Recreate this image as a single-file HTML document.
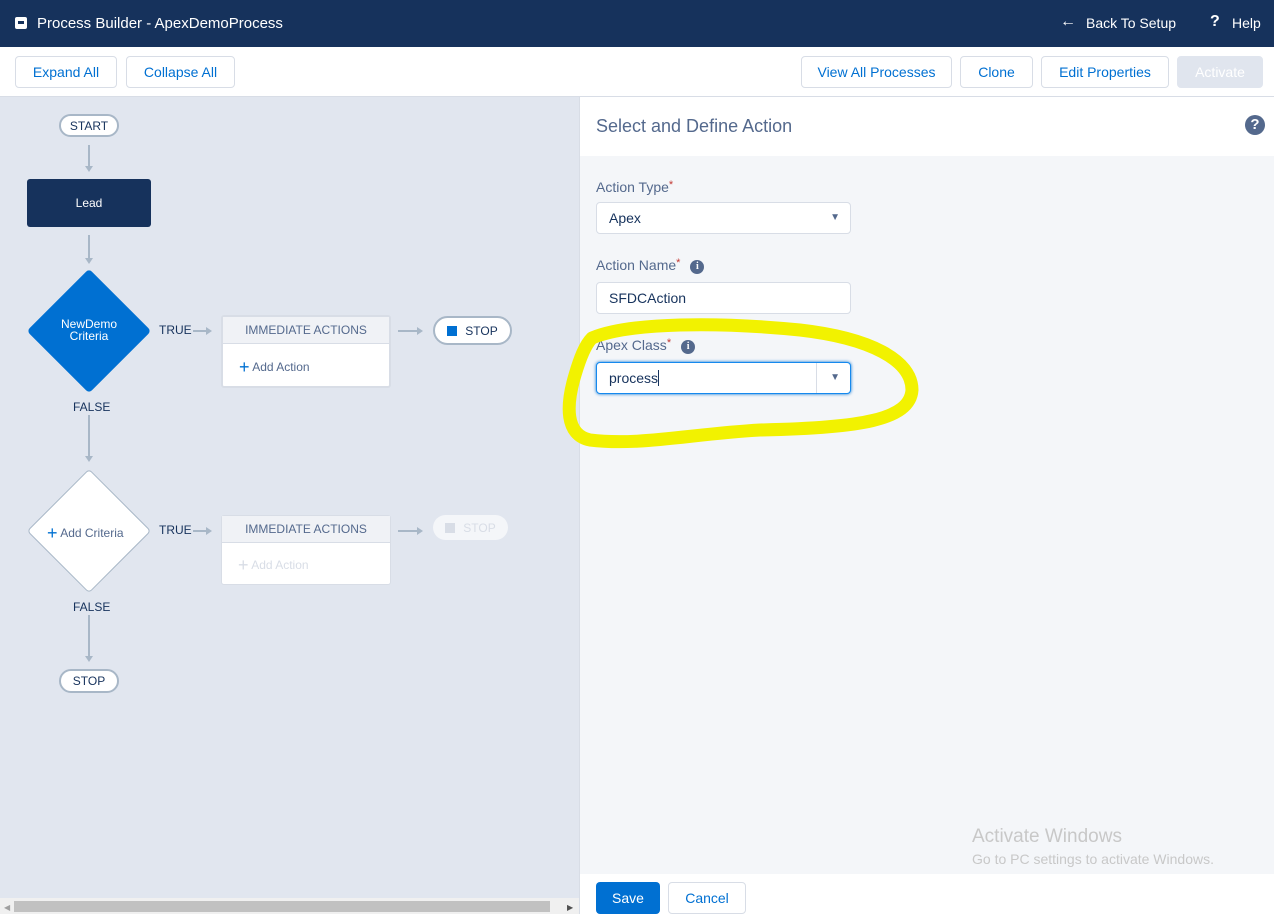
<!DOCTYPE html>
<html><head><meta charset="utf-8"><style>
*{box-sizing:border-box;margin:0;padding:0}
body{width:1274px;height:914px;overflow:hidden;position:relative;font-family:"Liberation Sans",sans-serif;background:#fff;font-size:13px}
.a{position:absolute}
.hdr{left:0;top:0;width:1274px;height:47px;background:#16325c;color:#fff}
.btn{position:absolute;top:56px;height:32px;border:1px solid #d8dde6;border-radius:4px;background:#fff;color:#0070d2;font-size:14px;display:flex;align-items:center;justify-content:center}
.canvas{left:0;top:97px;width:580px;height:817px;background:#e1e6ef}
.pill{position:absolute;height:23px;border:2px solid #a8b7c7;border-radius:12px;background:#fff;font-size:12px;color:#16325c;display:flex;align-items:center;justify-content:center}
.vl{position:absolute;width:1.5px;background:#a8b7c7}
.vl:after{content:"";position:absolute;left:-3.5px;bottom:-5px;border-left:4px solid transparent;border-right:4px solid transparent;border-top:6px solid #a8b7c7}
.hl{position:absolute;height:1.5px;background:#a8b7c7}
.hl:after{content:"";position:absolute;right:-5px;top:-3.5px;border-top:4px solid transparent;border-bottom:4px solid transparent;border-left:6px solid #a8b7c7}
.lbl{position:absolute;font-size:12px;color:#16325c}
.ia{position:absolute;width:170px;border:2px solid #d8dde6;border-radius:3px;background:#fff}
.ia .t{height:27px;background:#f0f2f6;border-bottom:1px solid #d8dde6;font-size:12px;color:#54698d;text-align:center;line-height:26px}
.flabel{position:absolute;left:596px;font-size:14px;color:#54698d}
.flabel b{color:#c23934;font-weight:normal;font-size:11px;vertical-align:top}
.info{display:inline-block;width:14px;height:14px;border-radius:50%;background:#54698d;color:#fff;font-size:10px;font-weight:bold;text-align:center;line-height:14px;margin-left:10px;font-family:"Liberation Serif",serif;vertical-align:1px}
.inp{position:absolute;left:596px;width:255px;height:32px;border:1px solid #d8dde6;border-radius:4px;background:#fff;font-size:14px;color:#16325c;padding-left:12px;line-height:30px}
</style></head><body>
<div class="a hdr">
  <div class="a" style="left:15px;top:17px;width:12px;height:12px;background:#fff;border-radius:2px"><div class="a" style="left:3px;top:4px;width:6px;height:3px;background:#16325c"></div></div>
  <div class="a" style="left:37px;top:15px;font-size:15px">Process Builder - ApexDemoProcess</div>
  <div class="a" style="left:1060px;top:13px;font-size:16px">&#8592;</div>
  <div class="a" style="left:1086px;top:15px;font-size:14px">Back To Setup</div>
  <div class="a" style="left:1210px;top:13px;font-size:16px;font-weight:bold">?</div>
  <div class="a" style="left:1232px;top:15px;font-size:14px">Help</div>
</div>
<div class="a" style="left:0;top:96px;width:1274px;height:1px;background:#d8dde6"></div>
<div class="btn" style="left:15px;width:102px">Expand All</div>
<div class="btn" style="left:126px;width:109px">Collapse All</div>
<div class="btn" style="left:801px;width:151px">View All Processes</div>
<div class="btn" style="left:960px;width:73px">Clone</div>
<div class="btn" style="left:1041px;width:128px">Edit Properties</div>
<div class="btn" style="left:1177px;width:86px;background:#e0e5ee;border-color:#e0e5ee;color:#fff">Activate</div>

<div class="a canvas">
  <div class="pill" style="left:59px;top:17px;width:60px">START</div>
  <div class="vl" style="left:88px;top:48px;height:22px"></div>
  <div class="a" style="left:27px;top:82px;width:124px;height:48px;background:#16325c;border-radius:3px;color:#fff;font-size:12px;text-align:center;line-height:48px">Lead</div>
  <div class="vl" style="left:88px;top:138px;height:24px"></div>
  <div class="a" style="left:45px;top:190px;width:88px;height:88px;background:#0070d2;transform:rotate(45deg);border-radius:4px"></div>
  <div class="a" style="left:27px;top:221px;width:124px;text-align:center;color:#fff;font-size:12px;line-height:12px">NewDemo<br>Criteria</div>
  <div class="lbl" style="left:159px;top:226px">TRUE</div>
  <div class="hl" style="left:193px;top:233px;width:14px"></div>
  <div class="ia" style="left:221px;top:218px;height:73px"><div class="t">IMMEDIATE ACTIONS</div><div style="padding:13px 0 0 16px;font-size:12px;color:#54698d"><span style="color:#0070d2;font-size:18px;vertical-align:-2px">+</span> Add Action</div></div>
  <div class="hl" style="left:398px;top:233px;width:20px"></div>
  <div class="pill" style="left:433px;top:219px;width:79px;height:29px;border-radius:15px;font-size:12px"><span style="width:10px;height:10px;background:#0070d2;margin-right:8px"></span>STOP</div>
  <div class="lbl" style="left:73px;top:303px">FALSE</div>
  <div class="vl" style="left:88px;top:318px;height:42px"></div>
  <div class="a" style="left:45px;top:390px;width:88px;height:88px;background:#fff;border:1px solid #a8b7c7;transform:rotate(45deg);border-radius:4px"></div>
  <div class="a" style="left:47px;top:426px;font-size:12px;color:#54698d"><span style="color:#0070d2;font-size:18px;vertical-align:-2px">+</span> Add Criteria</div>
  <div class="lbl" style="left:159px;top:426px">TRUE</div>
  <div class="hl" style="left:193px;top:433px;width:14px"></div>
  <div class="ia" style="left:221px;top:418px;height:70px;border-width:1px"><div class="t">IMMEDIATE ACTIONS</div><div style="padding:12px 0 0 16px;font-size:12px;color:#d8dde6"><span style="font-size:18px;vertical-align:-2px">+</span> Add Action</div></div>
  <div class="hl" style="left:398px;top:433px;width:20px"></div>
  <div class="a" style="left:433px;top:418px;width:75px;height:25px;border-radius:13px;background:#f4f6f9;font-size:12px;color:#d8dde6;display:flex;align-items:center;justify-content:center"><span style="width:10px;height:10px;background:#d8dde6;margin-right:8px"></span>STOP</div>
  <div class="lbl" style="left:73px;top:503px">FALSE</div>
  <div class="vl" style="left:88px;top:518px;height:42px"></div>
  <div class="pill" style="left:59px;top:572px;width:60px;height:24px">STOP</div>
  <div class="a" style="left:0;top:801px;width:580px;height:16px;background:#f0f0f0"></div>
  <div class="a" style="left:14px;top:804px;width:536px;height:11px;background:#c1c1c1"></div>
  <div class="a" style="left:4px;top:806px;font-size:8px;color:#a0a0a0">&#9664;</div>
  <div class="a" style="left:567px;top:806px;font-size:8px;color:#505050">&#9654;</div>
</div>
<div class="a" style="left:579px;top:97px;width:1px;height:817px;background:#d8dde6"></div>

<div class="a" style="left:580px;top:156px;width:694px;height:718px;background:#f4f6f9"></div>
<div class="a" style="left:596px;top:116px;font-size:18px;color:#54698d">Select and Define Action</div>
<div class="a" style="left:1245px;top:115px;width:20px;height:20px;border-radius:50%;background:#54698d;color:#fff;font-size:15px;font-weight:bold;text-align:center;line-height:20px">?</div>

<div class="flabel" style="top:179px">Action Type<b>*</b></div>
<div class="inp" style="top:202px">Apex<span class="a" style="right:10px;top:0;font-size:10px;color:#54698d">&#9660;</span></div>
<div class="flabel" style="top:257px">Action Name<b>*</b><span class="info">i</span></div>
<div class="inp" style="top:282px">SFDCAction</div>
<div class="flabel" style="top:337px">Apex Class<b>*</b><span class="info">i</span></div>
<div class="inp" style="top:362px;border-color:#1589ee;box-shadow:0 0 3px #0070d2">process<span style="display:inline-block;width:1px;height:16px;background:#16325c;vertical-align:-3px"></span><span class="a" style="left:219px;top:0;width:1px;height:30px;background:#d8dde6"></span><span class="a" style="right:10px;top:0;font-size:10px;color:#54698d">&#9660;</span></div>

<svg class="a" style="left:0;top:0" width="1274" height="914"><path d="M592 338 C630 322 720 322 800 330 C870 338 912 360 912 390 C910 420 860 428 760 430 C690 434 640 446 590 440 C565 435 566 405 575 375 C580 358 585 345 592 338 Z" fill="none" stroke="#f2f200" stroke-width="13" stroke-linejoin="round"/></svg>

<div class="a" style="left:972px;top:826px;font-size:19px;color:#c8c8c8">Activate Windows</div>
<div class="a" style="left:972px;top:851px;font-size:14px;color:#c8c8c8">Go to PC settings to activate Windows.</div>

<div class="a" style="left:596px;top:882px;width:64px;height:32px;background:#0070d2;border-radius:4px;color:#fff;font-size:14px;text-align:center;line-height:32px">Save</div>
<div class="a" style="left:668px;top:882px;width:78px;height:32px;border:1px solid #d8dde6;border-radius:4px;color:#0070d2;font-size:14px;text-align:center;line-height:30px">Cancel</div>
</body></html>
